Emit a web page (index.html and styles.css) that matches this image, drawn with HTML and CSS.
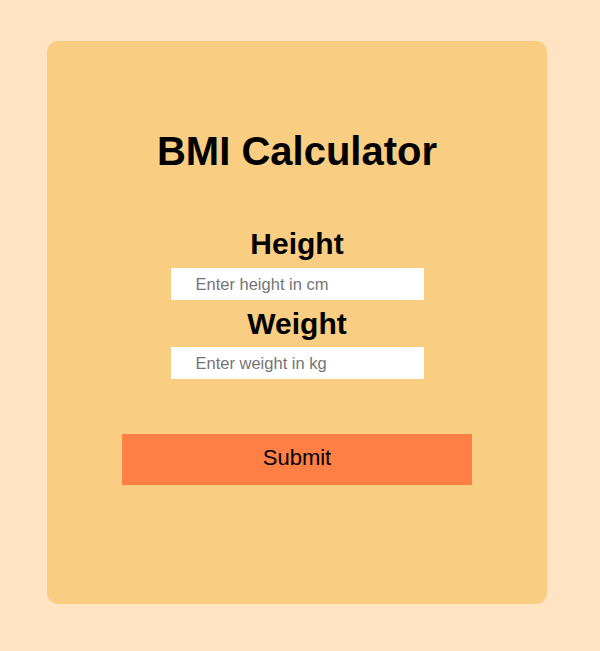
FILE: index.html
```html
<!DOCTYPE html>
<html lang="en">
<head>
<meta charset="utf-8">
<title>BMI Calculator</title>
<link rel="stylesheet" href="styles.css">
</head>
<body>
<div class="card">
  <h1 class="title">BMI Calculator</h1>
  <div class="fields">
    <label class="label" for="h">Height</label>
    <input class="input" id="h" type="text" placeholder="Enter height in cm">
    <label class="label label-second" for="w">Weight</label>
    <input class="input" id="w" type="text" placeholder="Enter weight in kg">
  </div>
  <button class="submit" type="button">Submit</button>
</div>
</body>
</html>
```

FILE: styles.css
```css
html, body {
  margin: 0;
  padding: 0;
}
body {
  background: #ffe4c4;
  font-family: "Liberation Sans", Arial, sans-serif;
  padding-top: 41px;
  height: 651px;
  box-sizing: border-box;
}
.card {
  width: 500px;
  margin-left: 47px;
  background: #f9cd82;
  border-radius: 11px;
  padding: 87px 0 119px;
  display: flex;
  flex-direction: column;
  align-items: center;
}
.title {
  margin: 0;
  font-size: 40px;
  line-height: 46px;
  font-weight: bold;
  color: #000;
}
.fields {
  margin-top: 52px;
  display: flex;
  flex-direction: column;
  align-items: center;
}
.label {
  font-size: 30px;
  line-height: 36px;
  font-weight: bold;
  color: #000;
  margin-bottom: 6px;
}
.label-second {
  margin-top: 6px;
  margin-bottom: 5px;
}
.input {
  width: 253px;
  height: 32px;
  box-sizing: border-box;
  border: none;
  outline: none;
  background: #fff;
  padding: 0 0 0 25px;
  font-family: "Liberation Sans", Arial, sans-serif;
  font-size: 16.5px;
  color: #000;
}
.input::placeholder {
  color: #757575;
}
.submit {
  margin-top: 55px;
  width: 350px;
  height: 51px;
  border: none;
  background: #ff7f45;
  font-family: "Liberation Sans", Arial, sans-serif;
  font-size: 22px;
  color: #000;
  padding: 0 0 3px;
}
```
